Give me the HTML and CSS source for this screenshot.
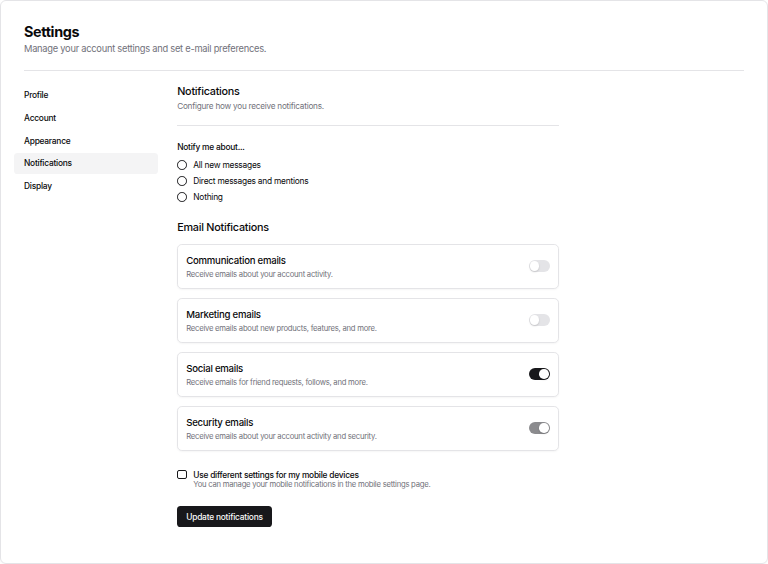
FILE: index.html
```html
<!DOCTYPE html>
<html lang="en">
<head>
<meta charset="utf-8">
<title>Settings</title>
<link rel="stylesheet" href="styles.css">
</head>
<body>
<div class="page">
  <header class="header">
    <h2 class="title">Settings</h2>
    <p class="subtitle">Manage your account settings and set e-mail preferences.</p>
  </header>
  <div class="sep sep-main"></div>
  <div class="layout">
    <aside class="sidebar">
      <nav class="nav">
        <a class="nav-link">Profile</a>
        <a class="nav-link">Account</a>
        <a class="nav-link">Appearance</a>
        <a class="nav-link active">Notifications</a>
        <a class="nav-link">Display</a>
      </nav>
    </aside>
    <main class="content">
      <h3 class="section-title">Notifications</h3>
      <p class="section-desc">Configure how you receive notifications.</p>
      <div class="sep sep-section"></div>
      <form class="form">
        <div class="label">Notify me about...</div>
        <div class="radio-group">
          <label class="radio-item"><span class="radio"></span><span>All new messages</span></label>
          <label class="radio-item"><span class="radio"></span><span>Direct messages and mentions</span></label>
          <label class="radio-item"><span class="radio"></span><span>Nothing</span></label>
        </div>
        <h3 class="email-title">Email Notifications</h3>
        <div class="cards">
          <div class="card">
            <div class="card-text">
              <div class="card-title">Communication emails</div>
              <div class="card-desc">Receive emails about your account activity.</div>
            </div>
            <span class="switch"><span class="thumb"></span></span>
          </div>
          <div class="card">
            <div class="card-text">
              <div class="card-title">Marketing emails</div>
              <div class="card-desc">Receive emails about new products, features, and more.</div>
            </div>
            <span class="switch"><span class="thumb"></span></span>
          </div>
          <div class="card">
            <div class="card-text">
              <div class="card-title">Social emails</div>
              <div class="card-desc">Receive emails for friend requests, follows, and more.</div>
            </div>
            <span class="switch on"><span class="thumb"></span></span>
          </div>
          <div class="card">
            <div class="card-text">
              <div class="card-title">Security emails</div>
              <div class="card-desc">Receive emails about your account activity and security.</div>
            </div>
            <span class="switch on disabled"><span class="thumb"></span></span>
          </div>
        </div>
        <div class="check-row">
          <span class="checkbox"></span>
          <div class="check-text">
            <div class="check-label">Use different settings for my mobile devices</div>
            <div class="check-desc">You can manage your mobile notifications in the mobile settings page.</div>
          </div>
        </div>
        <button type="button" class="button">Update notifications</button>
      </form>
    </main>
  </div>
</div>
</body>
</html>
```

FILE: styles.css
```css
* { box-sizing: border-box; }
html, body { margin: 0; padding: 0; background: #ffffff; }
body {
  font-family: Inter, "Liberation Sans", sans-serif;
  color: #09090b;
  letter-spacing: -0.015em;
  -webkit-font-smoothing: antialiased;
}
.page {
  width: 768px;
  height: 564px;
  border: 1px solid #e4e4e7;
  border-radius: 6px;
  padding: 21px 23px 0 23px;
  overflow: hidden;
  box-shadow: 0 1px 2px rgba(0,0,0,0.04);
}
.title {
  margin: 0;
  font-size: 14.4px;
  line-height: 19.2px;
  font-weight: 700;
  letter-spacing: -0.36px;
}
.subtitle {
  margin: 1.2px 0 0 0;
  font-size: 9.3px;
  line-height: 14.4px;
  color: #71717a;
  letter-spacing: -0.027em;
}
.sep { height: 1px; background: #e4e4e7; }
.sep-main { margin-top: 13.4px; }
.layout {
  display: flex;
  margin-top: 13px;
}
.sidebar {
  width: 143.6px;
  margin-left: -9.6px;
  flex-shrink: 0;
}
.nav {
  display: flex;
  flex-direction: column;
  gap: 1.2px;
}
.nav-link {
  display: flex;
  align-items: center;
  height: 21.6px;
  padding: 0 9.6px;
  border-radius: 3.6px;
  font-size: 8.4px;
  font-weight: 500;
  color: #09090b;
}
.nav-link.active { background: #f4f4f5; }
.content {
  margin-left: 19.2px;
  width: 382px;
}
.section-title {
  margin: 0;
  font-size: 10.8px;
  line-height: 15.6px;
  font-weight: 500;
}
.section-desc {
  margin: 0;
  font-size: 8.2px;
  line-height: 12px;
  color: #71717a;
}
.sep-section { margin-top: 13px; }
.form { margin: 16px 0 0 0; }
.label {
  font-size: 8.4px;
  line-height: 10px;
  font-weight: 500;
}
.radio-group {
  display: flex;
  flex-direction: column;
  gap: 4px;
  margin-top: 7px;
}
.radio-item {
  display: flex;
  align-items: center;
  gap: 6.5px;
  height: 12px;
  font-size: 8.4px;
}
.radio {
  width: 9.6px;
  height: 9.6px;
  border: 1px solid #18181b;
  border-radius: 50%;
  flex-shrink: 0;
}
.email-title {
  margin: 17px 0 0 0;
  font-size: 10.8px;
  line-height: 16px;
  font-weight: 500;
}
.cards {
  display: flex;
  flex-direction: column;
  gap: 9px;
  margin-top: 8px;
}
.card {
  display: flex;
  align-items: center;
  justify-content: space-between;
  height: 45px;
  padding: 0 8px;
  border: 1px solid #e4e4e7;
  border-radius: 4.8px;
  box-shadow: 0 1px 2px rgba(0,0,0,0.04);
}
.card-text {
  display: flex;
  flex-direction: column;
  gap: 2.5px;
  margin-top: 2px;
}
.card-title {
  font-size: 9.6px;
  line-height: 12px;
  font-weight: 500;
}
.card-desc {
  font-size: 7.68px;
  line-height: 11px;
  color: #71717a;
}
.switch {
  width: 21.6px;
  height: 12px;
  border-radius: 6px;
  background: #e4e4e7;
  padding: 1.2px;
  display: flex;
  align-items: center;
  flex-shrink: 0;
}
.thumb {
  width: 9.6px;
  height: 9.6px;
  border-radius: 50%;
  background: #ffffff;
  box-shadow: 0 1px 2px rgba(0,0,0,0.15);
}
.switch.on { background: #18181b; justify-content: flex-end; }
.switch.on.disabled { background: #8b8b8e; }
.check-row {
  display: flex;
  align-items: flex-start;
  gap: 6.5px;
  margin-top: 19px;
}
.checkbox {
  width: 9.6px;
  height: 9.6px;
  border: 1px solid #18181b;
  border-radius: 2px;
  flex-shrink: 0;
}
.check-label {
  font-size: 8.4px;
  line-height: 10px;
  font-weight: 500;
}
.check-desc {
  font-size: 7.68px;
  line-height: 10px;
  color: #71717a;
}
.button {
  display: block;
  margin-top: 16px;
  height: 21.6px;
  padding: 0 9px;
  border: none;
  border-radius: 3.6px;
  background: #18181b;
  color: #fafafa;
  font-family: Inter, "Liberation Sans", sans-serif;
  font-size: 8.4px;
  font-weight: 500;
  letter-spacing: -0.025em;
}
```
